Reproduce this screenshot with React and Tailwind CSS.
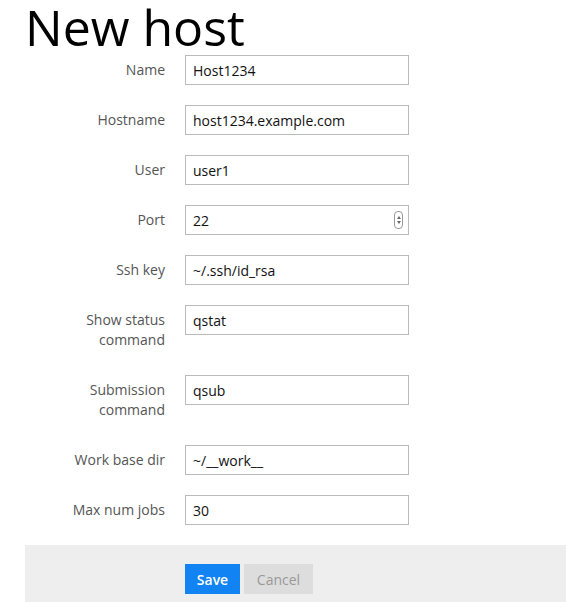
import React from "react";

const rows = [
  { label: ["Name"], value: "Host1234" },
  { label: ["Hostname"], value: "host1234.example.com" },
  { label: ["User"], value: "user1" },
  { label: ["Port"], value: "22", spinner: true },
  { label: ["Ssh key"], value: "~/.ssh/id_rsa" },
  { label: ["Show status", "command"], value: "qstat" },
  { label: ["Submission", "command"], value: "qsub" },
  { label: ["Work base dir"], value: "~/__work__" },
  { label: ["Max num jobs"], value: "30" },
];

export default function App() {
  return (
    <div
      className="min-h-[602px] bg-white text-[14px]"
      style={{ fontFamily: '"Open Sans", "Noto Sans", sans-serif' }}
    >
      <div className="pl-[25px]">
        <h1 className="text-[50px] leading-[55px] text-black font-normal m-0">New host</h1>
        <div className="flex flex-col gap-[20px]">
          {rows.map((r, i) => (
            <div key={i} className="flex gap-[20px] items-start">
              <div className="w-[140px] text-right text-[#555] leading-[20px] py-[5px]">
                {r.label.map((l, j) => (
                  <div key={j}>{l}</div>
                ))}
              </div>
              <div className="relative w-[224px] h-[30px] border border-[#bbb] flex items-center px-[7px] text-[#111]">
                {r.value}
                {r.spinner && (
                  <div className="absolute right-[5px] top-[5px] w-[9px] h-[18px] border border-[#999] rounded-[4px] flex flex-col items-center justify-center gap-[2px] bg-white">
                    <div className="w-0 h-0 border-l-[2px] border-r-[2px] border-b-[3px] border-l-transparent border-r-transparent border-b-[#666]" />
                    <div className="w-0 h-0 border-l-[2px] border-r-[2px] border-t-[3px] border-l-transparent border-r-transparent border-t-[#666]" />
                  </div>
                )}
              </div>
            </div>
          ))}
        </div>
        <div className="mt-[20px] bg-[#eeeeee] pt-[19px] pb-[20px] flex gap-[4px] pl-[160px]">
          <button className="h-[30px] w-[55px] bg-[#1283f2] text-white font-semibold">Save</button>
          <button className="h-[30px] w-[69px] bg-[#dddddd] text-[#999]">Cancel</button>
        </div>
      </div>
    </div>
  );
}
